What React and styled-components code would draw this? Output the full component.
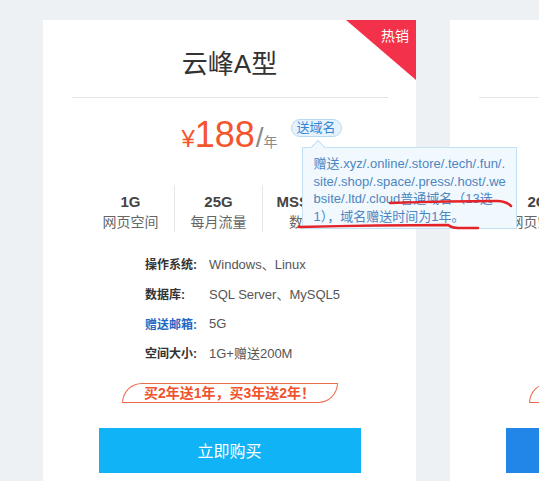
import React from "react";
import styled, { createGlobalStyle } from "styled-components";

const GlobalStyle = createGlobalStyle`
  html, body {
    margin: 0;
    padding: 0;
    width: 539px;
    height: 481px;
    overflow: hidden;
    background: #eef1f4;
    font-family: "Liberation Sans", "Noto Sans CJK SC", sans-serif;
  }
  * { box-sizing: border-box; }
`;

const Page = styled.div`
  position: relative;
  width: 539px;
  height: 481px;
  overflow: hidden;
  display: flex;
  gap: 34px;
  padding: 20px 0 0 43px;
`;

const Card = styled.div`
  position: relative;
  flex: 0 0 373px;
  width: 373px;
  height: 490px;
  background: #ffffff;
  display: flex;
  flex-direction: column;
`;

const HotBadge = styled.div`
  position: absolute;
  top: 0;
  right: 0;
  width: 70px;
  height: 60px;
  background: #f4314a;
  clip-path: polygon(0 0, 100% 0, 100% 100%);
  color: #fff;
  font-size: 14px;
  line-height: 16px;
  text-align: right;
  padding: 8px 7px 0 0;
`;

const Title = styled.h2`
  margin: 0;
  padding-top: 27px;
  line-height: 34px;
  font-size: 26px;
  font-weight: normal;
  color: #333;
  text-align: center;
`;

const Divider = styled.div`
  margin: 16px 28px 0 29px;
  height: 1px;
  background: #e2e4e6;
`;

const PriceRow = styled.div`
  margin-top: 19px;
  display: flex;
  justify-content: center;
`;

const Price = styled.div`
  position: relative;
  display: flex;
  align-items: baseline;
  line-height: 36px;
  height: 36px;
`;

const Yen = styled.span`
  font-size: 24px;
  color: #f5552d;
`;

const Amount = styled.span`
  font-size: 36px;
  color: #f5552d;
`;

const Slash = styled.span`
  font-size: 28px;
  color: #8a8a8a;
  margin-left: 1px;
`;

const Unit = styled.span`
  font-size: 14px;
  color: #8a8a8a;
`;

const Tag = styled.span`
  position: absolute;
  left: calc(100% + 13px);
  top: 2px;
  height: 18px;
  padding: 0 5px;
  border: 1px solid #b7daf3;
  border-radius: 9px;
  background: #e7f3fc;
  color: #3587d4;
  font-size: 13px;
  line-height: 16px;
  white-space: nowrap;
`;

const Tooltip = styled.div`
  position: absolute;
  left: 10px;
  top: 27px;
  width: 215px;
  height: 82px;
  padding: 7px 0 0 11px;
  background: #f1f8fe;
  border: 1px solid #c3e0f4;
  color: #4d86bf;
  font-size: 13px;
  line-height: 17.7px;
  z-index: 2;
  &::before {
    content: "";
    position: absolute;
    left: 10px;
    top: -6px;
    width: 9px;
    height: 9px;
    background: #f1f8fe;
    border-left: 1px solid #c3e0f4;
    border-top: 1px solid #c3e0f4;
    transform: rotate(45deg);
  }
`;

const TipLine = styled.div`
  white-space: nowrap;
`;

const Specs = styled.div`
  margin: 32px 0 0 44px;
  display: grid;
  grid-template-columns: 87px 88px 123px;
  height: 47px;
`;

const SpecCol = styled.div`
  border-left: ${(p) => (p.$first ? "none" : "1px solid #e6e8ea")};
  text-align: center;
  padding-top: 7px;
  white-space: nowrap;
`;

const SpecValue = styled.div`
  font-size: 15px;
  font-weight: bold;
  color: #444;
  line-height: 20px;
`;

const SpecLabel = styled.div`
  font-size: 14px;
  color: #666;
  line-height: 20px;
`;

const List = styled.div`
  margin: 17px 0 0 102px;
  display: flex;
  flex-direction: column;
`;

const ListRow = styled.div`
  display: flex;
  align-items: center;
  height: 29.7px;
  white-space: nowrap;
`;

const ListLabel = styled.span`
  width: 64px;
  font-size: 12px;
  font-weight: bold;
  color: ${(p) => (p.$link ? "#2566c3" : "#333")};
`;

const ListValue = styled.span`
  font-size: 13px;
  color: #555;
`;

const PromoRow = styled.div`
  margin-top: 15px;
  display: flex;
  justify-content: center;
`;

const Promo = styled.div`
  width: 216px;
  height: 20px;
  border: 1px solid #ec6a4d;
  border-radius: 20px 0 20px 0 / 20px 0 20px 0;
  color: #f0532d;
  font-size: 14px;
  font-weight: bold;
  line-height: 18px;
  text-align: center;
  white-space: nowrap;
`;

const BuyButton = styled.button`
  align-self: center;
  margin-top: 25px;
  width: 262px;
  height: 45px;
  border: none;
  background: ${(p) => p.$color};
  color: #fff;
  font-family: inherit;
  font-size: 16px;
  cursor: pointer;
`;

const Marks = styled.svg`
  position: absolute;
  left: 0;
  top: 0;
  pointer-events: none;
  z-index: 5;
`;

const plans = [
  {
    name: "云峰A型",
    hot: true,
    price: 188,
    specs: [
      ["1G", "网页空间"],
      ["25G", "每月流量"],
      ["MSSQL 100M", "数据库大小"],
    ],
    list: [
      ["操作系统:", "Windows、Linux"],
      ["数据库:", "SQL Server、MySQL5"],
      ["赠送邮箱:", "5G", true],
      ["空间大小:", "1G+赠送200M"],
    ],
    button: "#10b3f6",
    tip: true,
  },
  {
    name: "云峰B型",
    hot: false,
    price: 288,
    specs: [
      ["2G", "网页空间"],
      ["50G", "每月流量"],
      ["MSSQL 200M", "数据库大小"],
    ],
    list: [
      ["操作系统:", "Windows、Linux"],
      ["数据库:", "SQL Server、MySQL5"],
      ["赠送邮箱:", "10G", true],
      ["空间大小:", "2G+赠送200M"],
    ],
    button: "#2186e8",
    tip: false,
  },
];

function PlanCard({ plan }) {
  return (
    <Card>
      {plan.hot && <HotBadge>热销</HotBadge>}
      <Title>{plan.name}</Title>
      <Divider />
      <PriceRow>
        <Price>
          <Yen>¥</Yen>
          <Amount>{plan.price}</Amount>
          <Slash>/</Slash>
          <Unit>年</Unit>
          <Tag>
            送域名
            {plan.tip && (
              <Tooltip>
                <TipLine>赠送.xyz/.online/.store/.tech/.fun/.</TipLine>
                <TipLine>site/.shop/.space/.press/.host/.we</TipLine>
                <TipLine>bsite/.ltd/.cloud普通域名（13选</TipLine>
                <TipLine>1），域名赠送时间为1年。</TipLine>
              </Tooltip>
            )}
          </Tag>
        </Price>
      </PriceRow>
      <Specs>
        {plan.specs.map(([v, l], i) => (
          <SpecCol key={l} $first={i === 0}>
            <SpecValue>{v}</SpecValue>
            <SpecLabel>{l}</SpecLabel>
          </SpecCol>
        ))}
      </Specs>
      <List>
        {plan.list.map(([l, v, link]) => (
          <ListRow key={l}>
            <ListLabel $link={link}>{l}</ListLabel>
            <ListValue>{v}</ListValue>
          </ListRow>
        ))}
      </List>
      <PromoRow>
        <Promo>买2年送1年，买3年送2年！</Promo>
      </PromoRow>
      <BuyButton $color={plan.button}>立即购买</BuyButton>
    </Card>
  );
}

export default function App() {
  return (
    <>
      <GlobalStyle />
      <Page>
        {plans.map((p) => (
          <PlanCard key={p.name} plan={p} />
        ))}
        <Marks width="539" height="481" viewBox="0 0 539 481">
          <path
            d="M390 203 Q 450 201 497 201 Q 506 201 511 206"
            fill="none"
            stroke="#e42329"
            strokeWidth="2.5"
            strokeLinecap="round"
          />
          <path
            d="M299 227 Q 380 225 448 225 Q 452 228 458 228 L 478 228"
            fill="none"
            stroke="#e42329"
            strokeWidth="2.5"
            strokeLinecap="round"
          />
        </Marks>
      </Page>
    </>
  );
}
